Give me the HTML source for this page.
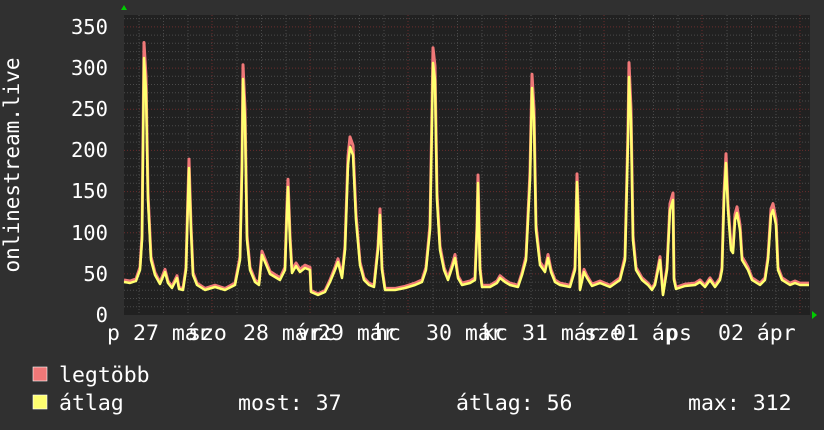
<!DOCTYPE html>
<html><head><meta charset="utf-8"><style>
html,body{margin:0;padding:0;background:#303030;}
svg{display:block}
text{font-family:"DejaVu Sans Mono","Liberation Mono",monospace;fill:#fff}
</style></head><body>
<svg width="824" height="430" viewBox="0 0 824 430">
<rect width="824" height="430" fill="#303030"/>
<rect x="124" y="15" width="686" height="300" fill="#212121"/>
<g stroke="#4a4a4a" stroke-width="1" stroke-dasharray="1,2">
<path d="M124 306.8H810M124 298.5H810M124 290.3H810M124 282.1H810M124 265.6H810M124 257.4H810M124 249.2H810M124 240.9H810M124 224.5H810M124 216.2H810M124 208H810M124 199.8H810M124 183.3H810M124 175.1H810M124 166.8H810M124 158.6H810M124 142.1H810M124 133.9H810M124 125.7H810M124 117.4H810M124 101H810M124 92.7H810M124 84.5H810M124 76.3H810M124 59.8H810M124 51.6H810M124 43.3H810M124 35.1H810M124 18.6H810"/>
<path d="M139 15V315M163.5 15V315M188 15V315M237 15V315M261.5 15V315M286 15V315M335 15V315M359.5 15V315M384 15V315M433 15V315M457.5 15V315M482 15V315M531 15V315M555.5 15V315M580 15V315M629 15V315M653.5 15V315M678 15V315M727 15V315M751.5 15V315M776 15V315"/>
</g>
<g stroke="#6a2c2c" stroke-width="1" stroke-dasharray="1,2">
<path d="M124 273.9H810M124 232.7H810M124 191.6H810M124 150.4H810M124 109.2H810M124 68.1H810M124 26.9H810"/>
<path d="M212 15V315M310 15V315M408 15V315M506 15V315M604 15V315M702 15V315M800 15V315"/>
</g>
<g fill="none" stroke-width="2.5" stroke-linejoin="round">
<polyline transform="translate(0,315) scale(1,1.06) translate(0,-315)" stroke="#f07878" stroke-width="3" points="124,282 130,283 136,281 140,270 142,240 144,58 146,90 148,200 151,260 155,275 160,284 165,272 168,283 172,288 177,278 179,289 183,290 186,270 188,200 189,168 191,230 193,275 197,285 205,290 215,287 225,290 235,285 240,260 242,170 243,79 245,120 247,240 250,270 255,282 259,285 262,255 265,262 270,274 280,280 285,270 287,210 288,187 290,240 292,273 296,266 300,272 305,268 310,270 311,292 318,295 325,292 330,282 335,270 338,262 342,278 345,250 348,165 350,147 353,155 356,220 360,265 364,280 369,285 374,287 378,250 380,215 382,270 385,290 395,290 405,288 415,285 422,282 426,270 430,230 432,120 433,63 435,80 437,200 440,250 444,270 448,280 452,268 455,258 458,278 462,285 470,283 475,280 477,230 478,183 480,270 482,287 490,287 497,283 500,278 505,282 510,285 518,287 522,275 526,260 530,180 532,88 534,120 536,230 540,265 545,272 548,258 551,272 555,282 560,285 570,287 575,270 577,182 579,240 580,290 584,272 587,278 592,286 600,283 610,287 620,280 625,260 628,140 629,77 631,120 633,240 636,270 642,280 648,285 652,290 655,285 660,260 663,295 667,270 670,210 673,200 674,280 676,289 685,286 695,285 700,282 705,287 710,280 715,287 720,280 722,270 724,200 726,163 728,210 731,250 733,253 735,220 737,213 740,230 742,260 745,265 748,270 752,280 760,285 765,280 768,260 771,215 773,210 776,225 778,270 782,280 790,285 795,283 800,285 809,285"/>
<polyline stroke="#ffff70" points="124,282 130,283 136,281 140,270 142,240 144,58 146,90 148,200 151,260 155,275 160,284 165,272 168,283 172,288 177,278 179,289 183,290 186,270 188,200 189,168 191,230 193,275 197,285 205,290 215,287 225,290 235,285 240,260 242,170 243,79 245,120 247,240 250,270 255,282 259,285 262,255 265,262 270,274 280,280 285,270 287,210 288,187 290,240 292,273 296,266 300,272 305,268 310,270 311,292 318,295 325,292 330,282 335,270 338,262 342,278 345,250 348,165 350,147 353,155 356,220 360,265 364,280 369,285 374,287 378,250 380,215 382,270 385,290 395,290 405,288 415,285 422,282 426,270 430,230 432,120 433,63 435,80 437,200 440,250 444,270 448,280 452,268 455,258 458,278 462,285 470,283 475,280 477,230 478,183 480,270 482,287 490,287 497,283 500,278 505,282 510,285 518,287 522,275 526,260 530,180 532,88 534,120 536,230 540,265 545,272 548,258 551,272 555,282 560,285 570,287 575,270 577,182 579,240 580,290 584,272 587,278 592,286 600,283 610,287 620,280 625,260 628,140 629,77 631,120 633,240 636,270 642,280 648,285 652,290 655,285 660,260 663,295 667,270 670,210 673,200 674,280 676,289 685,286 695,285 700,282 705,287 710,280 715,287 720,280 722,270 724,200 726,163 728,210 731,250 733,253 735,220 737,213 740,230 742,260 745,265 748,270 752,280 760,285 765,280 768,260 771,215 773,210 776,225 778,270 782,280 790,285 795,283 800,285 809,285"/>
</g>
<path d="M121 10L124 5L127 10Z" fill="#0c0"/>
<path d="M812 311L817 315L812 319Z" fill="#0c0"/>
<g font-size="20.5" text-anchor="end">
<text x="108" y="34">350</text><text x="108" y="75">300</text><text x="108" y="116">250</text>
<text x="108" y="157">200</text><text x="108" y="198">150</text><text x="108" y="240">100</text>
<text x="108" y="281">50</text><text x="108" y="322">0</text>
</g>
<text transform="translate(19,165) rotate(-90)" font-size="21" text-anchor="middle">onlinestream.live</text>
<g font-size="21.5">
<text x="107" y="340">p</text>
<text x="133" y="340">27 már</text><text x="188" y="340">szo</text>
<text x="243" y="340">28 már</text><text x="297" y="340">vrc</text>
<text x="318" y="340">29 már</text><text x="375" y="340">hc</text>
<text x="426" y="340">30 már</text><text x="482" y="340">kc</text>
<text x="522" y="340">31 már</text><text x="584" y="340">sze</text>
<text x="613" y="340">01 áp</text><text x="666" y="340">ps</text>
<text x="718" y="340">02 ápr</text>
</g>
<rect x="33" y="367" width="14" height="14" fill="#f07878" stroke="#fff" stroke-width="0.6"/>
<rect x="33" y="395" width="14" height="14" fill="#ffff70" stroke="#fff" stroke-width="0.6"/>
<g font-size="21.5">
<text x="59" y="382">legtöbb</text>
<text x="59" y="410">átlag</text>
<text x="238" y="410">most: 37</text>
<text x="456" y="410">átlag: 56</text>
<text x="688" y="410">max: 312</text>
</g>
</svg>
</body></html>
